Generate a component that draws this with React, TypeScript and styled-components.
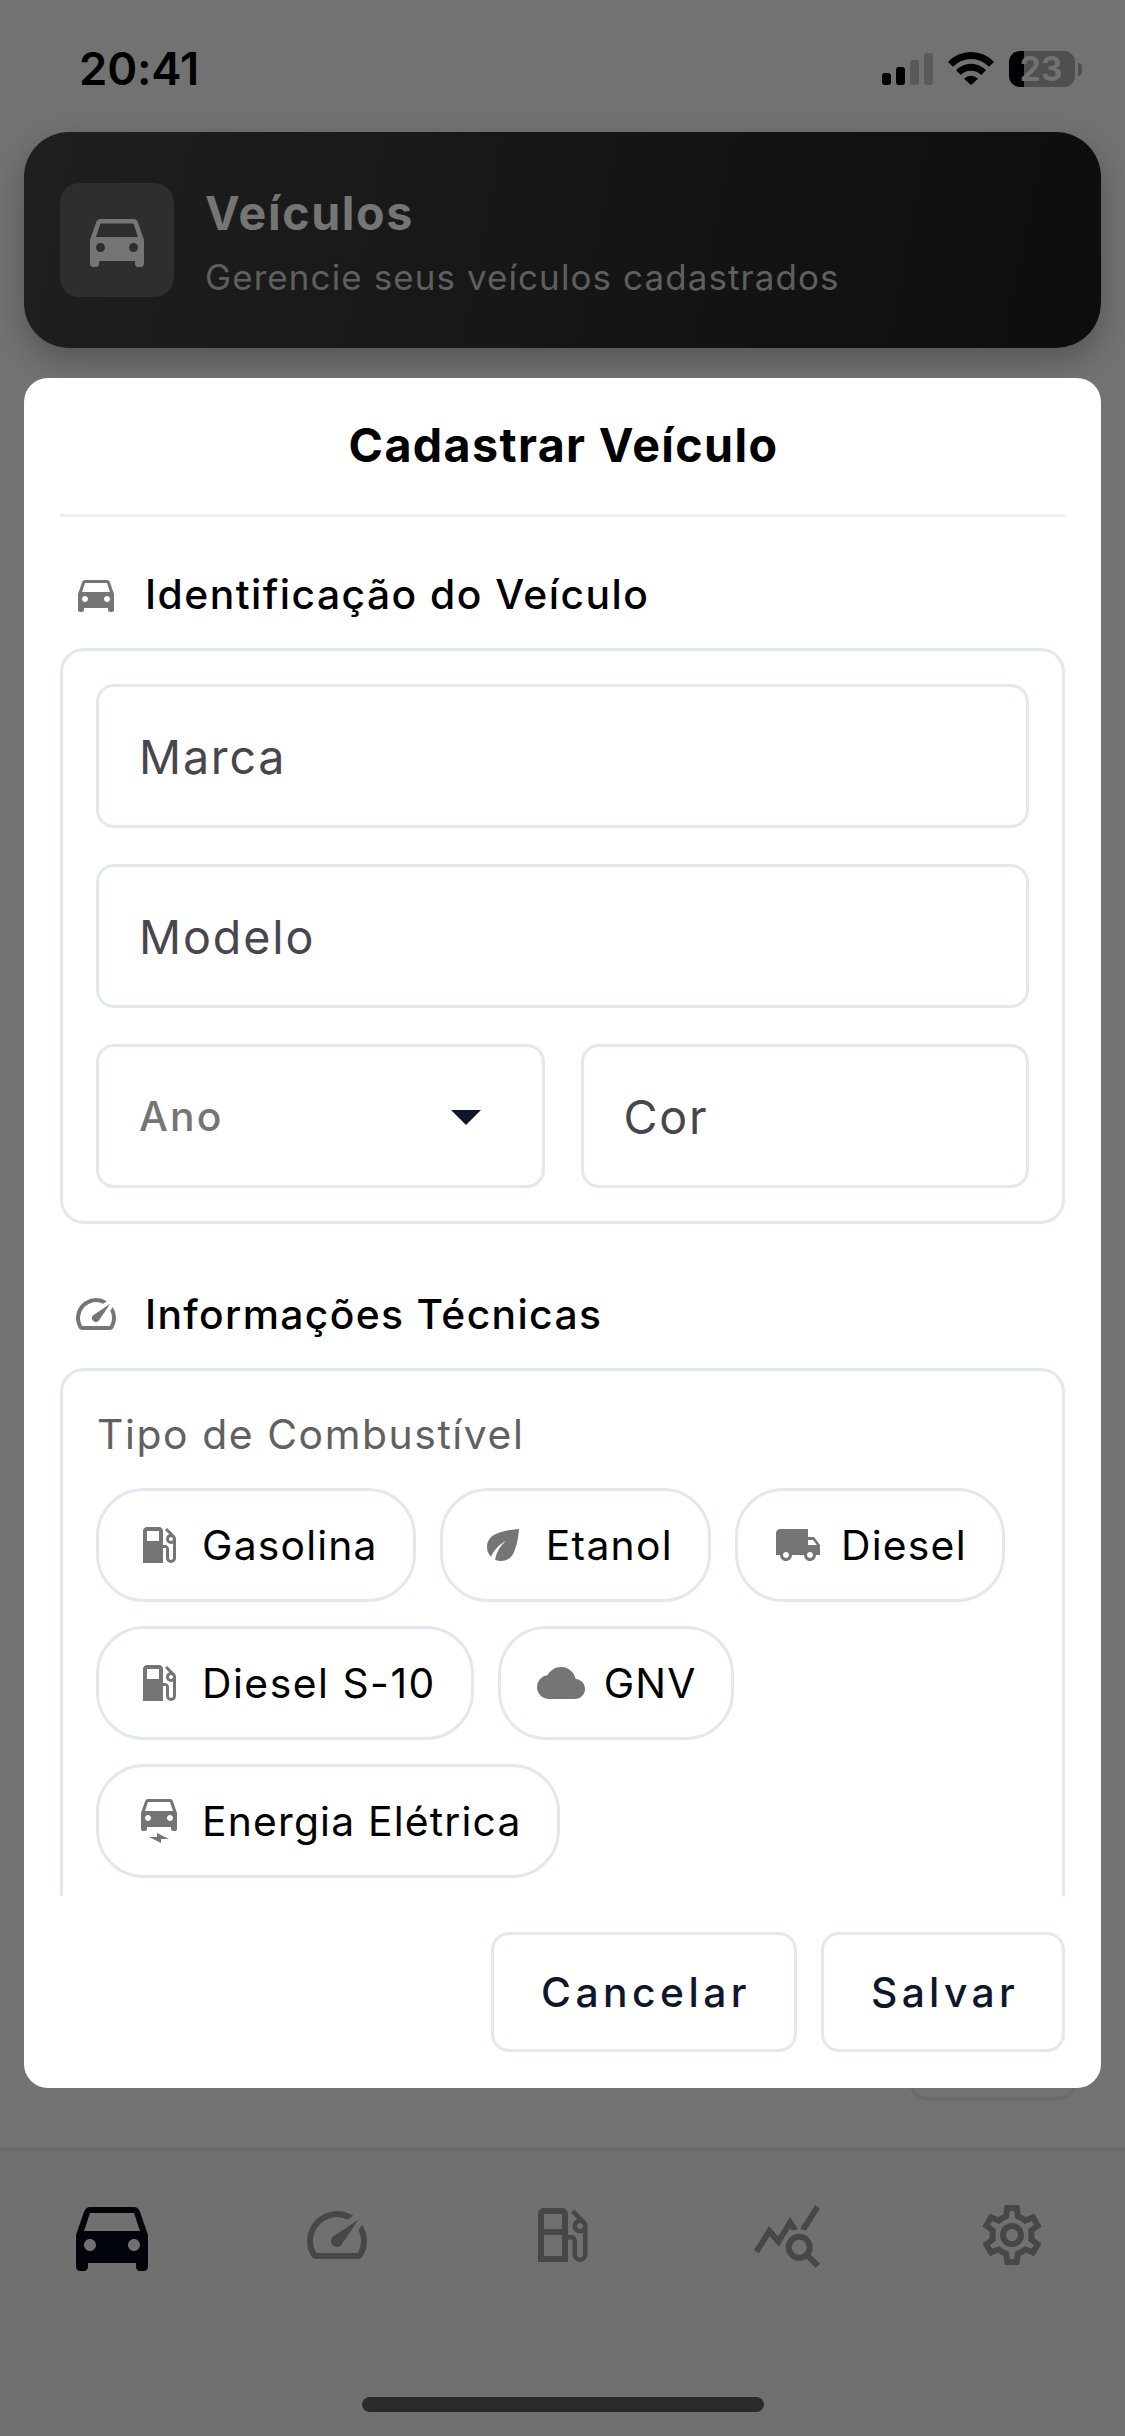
import React from "react";
import styled, { createGlobalStyle } from "styled-components";
import type { IconType } from "react-icons";
import {
  MdArrowDropDown,
  MdCloud,
  MdDirectionsCar,
  MdEco,
  MdElectricCar,
  MdLocalGasStation,
  MdLocalShipping,
  MdOutlineLocalGasStation,
  MdOutlineSettings,
  MdQueryStats,
  MdSpeed,
} from "react-icons/md";

const line = "#e2e8f0";
const navy = "#0f172a";
const iconGray = "#757575";

const GlobalStyle = createGlobalStyle`
  * { box-sizing: border-box; }
  body {
    margin: 0;
    background: #727272;
    font-family: Inter, "Liberation Sans", sans-serif;
  }
  svg { display: block; flex: none; }
`;

const Screen = styled.div`
  position: relative;
  display: flex;
  flex-direction: column;
  width: 1125px;
  height: 2436px;
  overflow: hidden;
  background: #727272;
`;

const StatusBar = styled.header`
  display: flex;
  justify-content: space-between;
  flex: none;
  height: 132px;
  padding: 51px 43px 0 79px;
`;

const Clock = styled.span`
  color: #000;
  font-size: 45.5px;
  font-weight: 600;
  line-height: 36px;
  letter-spacing: -0.2px;
`;

const StatusIcons = styled.div`
  display: flex;
  align-items: flex-start;
  height: 36px;
`;

const Signal = styled.div`
  display: flex;
  align-items: flex-end;
  gap: 5px;
  height: 34px;
`;

const SignalBar = styled.i<{ $height: number; $on?: boolean }>`
  width: 9px;
  height: ${(p) => p.$height}px;
  border-radius: 3px;
  background: ${(p) => (p.$on ? "#000" : "#5a5a5a")};
`;

const WifiIcon = styled.svg`
  margin: 1px 15px 0 15px;
`;

const Battery = styled.div`
  display: flex;
  align-items: center;
  justify-content: center;
  width: 66px;
  height: 36px;
  border-radius: 11px;
  background: linear-gradient(90deg, #000 15px, #4f4f4f 15px);
  color: #717171;
  font-size: 33.5px;
  font-weight: 700;
  line-height: 36px;
  padding-right: 2px;
`;

const BatteryCap = styled.i`
  width: 4px;
  height: 13px;
  margin: 12px 0 0 3px;
  border-radius: 0 4px 4px 0;
  background: #505050;
`;

const Banner = styled.section`
  display: flex;
  align-items: flex-start;
  flex: none;
  height: 216px;
  margin: 0 24px;
  padding: 0 36px;
  border-radius: 45px;
  background: linear-gradient(101deg, #1f1f1f 0%, #0d0d0d 100%);
  box-shadow: 0 12px 30px rgba(0, 0, 0, 0.26);
`;

const BannerIcon = styled.div`
  display: flex;
  align-items: center;
  justify-content: center;
  width: 114px;
  height: 114px;
  margin-top: 51px;
  border-radius: 20px;
  background: #2e2e2e;
  color: #757575;
`;

const BannerText = styled.div`
  margin-left: 31px;
  padding-top: 49px;
`;

const BannerTitle = styled.h1`
  margin: 0;
  color: #757575;
  font-size: 46.6px;
  font-weight: 700;
  line-height: 64px;
  letter-spacing: 1.61px;
`;

const BannerSubtitle = styled.p`
  margin: 0;
  color: #5f5f5f;
  font-size: 35px;
  line-height: 64px;
  letter-spacing: 1.08px;
`;

const Content = styled.main`
  display: flex;
  flex: 1;
  align-items: flex-end;
  justify-content: flex-end;
  padding: 0 48px 48px;
`;

const DimmedButton = styled.div`
  width: 168px;
  height: 120px;
  border: 3px solid #686b6f;
  border-radius: 18px;
`;

const TabBar = styled.nav`
  display: flex;
  flex-direction: column;
  flex: none;
  height: 288px;
  border-top: 3px solid #68696b;
  background: #707070;
`;

const Tabs = styled.div`
  display: grid;
  grid-template-columns: repeat(5, 1fr);
  height: 168px;
`;

const Tab = styled.div<{ $active?: boolean }>`
  display: flex;
  align-items: center;
  justify-content: center;
  padding-right: 1px;
  color: ${(p) => (p.$active ? "#02040b" : "#474747")};
`;

const HomeIndicator = styled.div`
  width: 402px;
  height: 15px;
  margin: 78px auto 0;
  border-radius: 8px;
  background: #2b2b2b;
`;

const DialogLayer = styled.div`
  position: absolute;
  inset: 0;
  padding: 378px 24px 348px;
`;

const Dialog = styled.section`
  display: flex;
  flex-direction: column;
  height: 100%;
  padding: 0 36px;
  border-radius: 24px;
  background: #fff;
`;

const DialogTitle = styled.h2`
  flex: none;
  height: 139px;
  margin: 0;
  padding-left: 2px;
  border-bottom: 3px solid #eee;
  color: #000;
  font-size: 46.6px;
  font-weight: 700;
  line-height: 134px;
  letter-spacing: 1.38px;
  text-align: center;
`;

const DialogBody = styled.div`
  flex: 1;
  min-height: 0;
  overflow: hidden;
  padding-top: 53px;
`;

const SectionHeading = styled.div`
  display: flex;
  align-items: center;
  height: 48px;
  margin-bottom: 30px;
  padding-left: 12px;
  color: ${iconGray};
`;

const SectionTitle = styled.h3<{ $tracking: number }>`
  margin: 0 0 0 25px;
  color: #000;
  font-size: 40.8px;
  font-weight: 470;
  line-height: 48px;
  letter-spacing: ${(p) => p.$tracking}px;
  white-space: nowrap;
`;

const Card = styled.div`
  display: grid;
  gap: 36px;
  margin-bottom: 66px;
  padding: 33px;
  border: 3px solid ${line};
  border-radius: 24px;
`;

const FuelCard = styled(Card)`
  gap: 24px;
  margin-bottom: 0;
  padding-bottom: 120px;
`;

const FieldRow = styled.div`
  display: grid;
  grid-template-columns: 1fr 1fr;
  gap: 36px;
`;

const Field = styled.div<{ $tracking: number }>`
  display: flex;
  align-items: center;
  height: 144px;
  padding: 2px 39px 0 40px;
  border: 3px solid ${line};
  border-radius: 18px;
  color: #49454f;
  font-size: 46.6px;
  letter-spacing: ${(p) => p.$tracking}px;
`;

const SelectField = styled(Field)`
  justify-content: space-between;
  padding-top: 0;
  padding-right: 40px;
  color: #757575;
  font-size: 40.8px;
  font-weight: 470;

  svg { color: ${navy}; }
`;

const FieldLabel = styled.div`
  height: 60px;
  padding-left: 1px;
  color: #616161;
  font-size: 40.8px;
  font-weight: 430;
  line-height: 60px;
  letter-spacing: 1.6px;
`;

const Chips = styled.div`
  display: flex;
  flex-wrap: wrap;
  gap: 24px;
`;

const Chip = styled.div<{ $tracking: number }>`
  display: flex;
  align-items: center;
  gap: 19px;
  height: 114px;
  padding: 0 35px 0 36px;
  border: 3px solid ${line};
  border-radius: 48px;
  color: #000;
  font-size: 40.8px;
  letter-spacing: ${(p) => p.$tracking}px;
  white-space: nowrap;

  svg { color: ${iconGray}; }
`;

const DialogActions = styled.footer`
  display: flex;
  justify-content: flex-end;
  flex: none;
  gap: 24px;
  height: 192px;
  padding: 36px 0;
`;

const ActionButton = styled.button<{ $tracking: number }>`
  height: 120px;
  padding: 0 43px 0 47px;
  border: 3px solid ${line};
  border-radius: 18px;
  background: transparent;
  color: ${navy};
  font-family: inherit;
  font-size: 40.8px;
  font-weight: 470;
  letter-spacing: ${(p) => p.$tracking}px;
`;

const fuels: { label: string; icon: IconType; tracking: number }[] = [
  { label: "Gasolina", icon: MdLocalGasStation, tracking: 1.2 },
  { label: "Etanol", icon: MdEco, tracking: 1.3 },
  { label: "Diesel", icon: MdLocalShipping, tracking: 1.25 },
  { label: "Diesel S-10", icon: MdLocalGasStation, tracking: 1.52 },
  { label: "GNV", icon: MdCloud, tracking: 1.1 },
  { label: "Energia Elétrica", icon: MdElectricCar, tracking: 1.2 },
];

const tabs: { icon: IconType; size: number; active?: boolean }[] = [
  { icon: MdDirectionsCar, size: 96, active: true },
  { icon: MdSpeed, size: 72 },
  { icon: MdOutlineLocalGasStation, size: 72 },
  { icon: MdQueryStats, size: 72 },
  { icon: MdOutlineSettings, size: 72 },
];

export default function App() {
  return (
    <>
      <GlobalStyle />
      <Screen>
        <StatusBar>
          <Clock>20:41</Clock>
          <StatusIcons>
            <Signal>
              <SignalBar $height={12} $on />
              <SignalBar $height={18} $on />
              <SignalBar $height={25} />
              <SignalBar $height={32} />
            </Signal>
            <WifiIcon width="46" height="33" viewBox="0 0 46 33">
              <path d="M0 10A31.5 31.5 0 0 1 46 10L41 14.8A24.8 24.8 0 0 0 5 14.8Z" />
              <path d="M8 18.2A20.6 20.6 0 0 1 38 18.2L33.2 23A14.2 14.2 0 0 0 12.8 23Z" />
              <path d="M16 26.8A9.6 9.6 0 0 1 30 26.8L23 33Z" />
            </WifiIcon>
            <Battery>23</Battery>
            <BatteryCap />
          </StatusIcons>
        </StatusBar>

        <Banner>
          <BannerIcon>
            <MdDirectionsCar size={72} />
          </BannerIcon>
          <BannerText>
            <BannerTitle>Veículos</BannerTitle>
            <BannerSubtitle>Gerencie seus veículos cadastrados</BannerSubtitle>
          </BannerText>
        </Banner>

        <Content>
          <DimmedButton />
        </Content>

        <TabBar>
          <Tabs>
            {tabs.map(({ icon: Icon, size, active }, i) => (
              <Tab key={i} $active={active}>
                <Icon size={size} />
              </Tab>
            ))}
          </Tabs>
          <HomeIndicator />
        </TabBar>

        <DialogLayer>
          <Dialog>
            <DialogTitle>Cadastrar Veículo</DialogTitle>
            <DialogBody>
              <SectionHeading>
                <MdDirectionsCar size={48} />
                <SectionTitle $tracking={1.46}>Identificação do Veículo</SectionTitle>
              </SectionHeading>
              <Card>
                <Field $tracking={1.8}>Marca</Field>
                <Field $tracking={1.9}>Modelo</Field>
                <FieldRow>
                  <SelectField $tracking={2.1}>
                    Ano
                    <MdArrowDropDown size={72} />
                  </SelectField>
                  <Field $tracking={1.8}>Cor</Field>
                </FieldRow>
              </Card>

              <SectionHeading>
                <MdSpeed size={48} />
                <SectionTitle $tracking={1.35}>Informações Técnicas</SectionTitle>
              </SectionHeading>
              <FuelCard>
                <FieldLabel>Tipo de Combustível</FieldLabel>
                <Chips>
                  {fuels.map(({ label, icon: Icon, tracking }) => (
                    <Chip key={label} $tracking={tracking}>
                      <Icon size={48} />
                      {label}
                    </Chip>
                  ))}
                </Chips>
              </FuelCard>
            </DialogBody>
            <DialogActions>
              <ActionButton $tracking={4.45}>Cancelar</ActionButton>
              <ActionButton $tracking={4.3}>Salvar</ActionButton>
            </DialogActions>
          </Dialog>
        </DialogLayer>
      </Screen>
    </>
  );
}
